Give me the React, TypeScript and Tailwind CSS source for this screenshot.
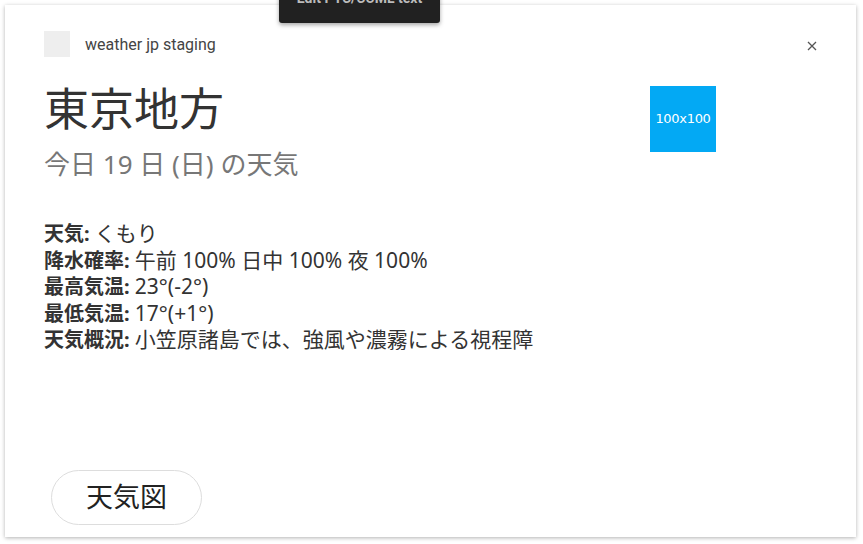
import React from "react";

export default function App() {
  const font = { fontFamily: '"Noto Sans", "Noto Sans CJK JP", sans-serif' };
  const rows: [string, string][] = [
    ["天気:", "くもり"],
    ["降水確率:", "午前 100% 日中 100% 夜 100%"],
    ["最高気温:", "23°(-2°)"],
    ["最低気温:", "17°(+1°)"],
    ["天気概況:", "小笠原諸島では、強風や濃霧による視程障"],
  ];
  return (
    <div className="relative w-[863px] h-[544px] bg-white overflow-hidden" style={font}>
      <div className="absolute left-[5px] top-[5px] w-[851px] h-[532px] bg-white shadow-[0_1px_4px_rgba(0,0,0,0.3)] flex flex-col pl-[39px] pr-[38px] pt-[26px] pb-[12px]">
        <div className="flex items-center h-[26px]">
          <div className="w-[26px] h-[26px] bg-[#eeeeee]" />
          <div className="ml-[15px] text-[16px] text-[#444] font-['Roboto'] mt-[2px]">weather jp staging</div>
          <svg className="ml-auto mr-[1px] mt-[3px]" width="10" height="10" viewBox="0 0 10 10">
            <path d="M1 1 L9 9 M9 1 L1 9" stroke="#555" strokeWidth="1.3" />
          </svg>
        </div>
        <div className="flex mt-[28px]">
          <div className="flex-1">
            <div className="text-[45px] leading-[60px] text-[#333] -mt-[6px]">東京地方</div>
            <div className="text-[26px] leading-[34px] text-[#777] mt-[8px]">今日 19 日 (日) の天気</div>
          </div>
          <div className="w-[66px] h-[66px] bg-[#03a9f4] text-white text-[13px] flex items-center justify-center mr-[102px] mt-[1px] font-['DejaVu_Sans'] tracking-[-0.3px]">
            100x100
          </div>
        </div>
        <div className="mt-[40px] text-[20px] leading-[26px] text-[#333]">
          {rows.map(([k, v]) => (
            <div key={k} className="h-[26.5px] whitespace-nowrap">
              <span className="font-bold">{k}</span> <span className="text-[21px] leading-[20px]">{v}</span>
            </div>
          ))}
        </div>
        <div className="mt-auto ml-[7px]">
          <div className="w-[151px] h-[55px] rounded-full border border-[#dddddd] flex items-center justify-center text-[27px] text-[#222]">
            天気図
          </div>
        </div>
      </div>
      <div className="absolute left-[279px] top-[-10px] w-[161px] h-[33px] bg-[#212121] rounded-b-[3px] shadow-[0_2px_4px_rgba(0,0,0,0.35)] flex justify-center">
        <span className="text-[14px] font-bold text-[#bbb] leading-none mt-[1px] font-['Roboto']">Edit PTC/CUML text</span>
      </div>
    </div>
  );
}
